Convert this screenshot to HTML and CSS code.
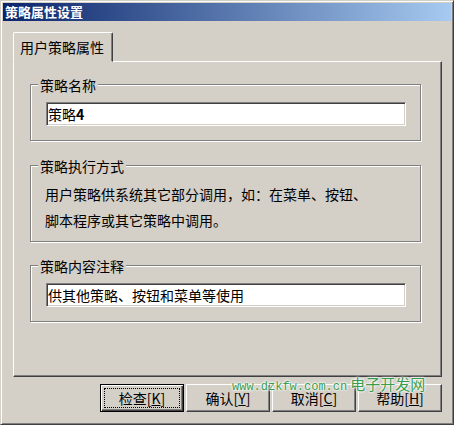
FILE: index.html
```html
<!DOCTYPE html>
<html lang="zh-CN">
<head>
    <meta charset="UTF-8">
    <title>策略属性设置</title>
    <link rel="stylesheet" href="styles.css">
</head>
<body>
    <div class="window">
        <div class="titlebar">策略属性设置</div>
        <div class="content">
            <div class="tab">用户策略属性</div>
            <div class="panel">
                <div class="group group-name">
                    <div class="legend">策略名称</div>
                    <div class="field">策略<b>4</b></div>
                </div>
                <div class="group group-run">
                    <div class="legend">策略执行方式</div>
                    <div class="desc">用户策略供系统其它部分调用，如：在菜单、按钮、<br>脚本程序或其它策略中调用。</div>
                </div>
                <div class="group group-note">
                    <div class="legend">策略内容注释</div>
                    <div class="field">供其他策略、按钮和菜单等使用</div>
                </div>
            </div>
            <div class="buttons">
                <button class="btn btn-default">检查[<u>K</u>]</button>
                <button class="btn">确认[<u>Y</u>]</button>
                <button class="btn">取消[<u>C</u>]</button>
                <button class="btn">帮助[<u>H</u>]</button>
            </div>
        </div>
        <div class="watermark"><span class="wm-url">www.dzkfw.com.cn</span> <span class="wm-name">电子开发网</span></div>
    </div>
</body>
</html>
```

FILE: styles.css
```css
body {
    margin: 0;
    background: #d4d0c8;
    font-family: "Noto Sans CJK SC", "Noto Sans", sans-serif;
    font-size: 14px;
    color: #000;
}

.window {
    box-sizing: border-box;
    position: relative;
    width: 454px;
    height: 425px;
    padding: 2px;
    background: #d4d0c8;
    border: 1px solid;
    border-color: #d4d0c8 #404040 #404040 #d4d0c8;
    box-shadow: inset 1px 1px #fff, inset -1px -1px #808080;
}

.titlebar {
    height: 18px;
    line-height: 18px;
    padding-left: 2px;
    background: linear-gradient(to right, #0a246a, #a6caf0);
    color: #fff;
    font-size: 13px;
    font-weight: bold;
}

.content {
    padding: 11px 9px 0 10px;
}

/* tab header */
.tab {
    box-sizing: border-box;
    position: relative;
    z-index: 1;
    width: 100px;
    height: 30px;
    margin-bottom: -1px;
    padding-left: 6px;
    line-height: 28px;
    background: #d4d0c8;
    border: 1px solid;
    border-color: #fff #404040 #d4d0c8 #fff;
    border-radius: 2px 2px 0 0;
    box-shadow: inset -1px 0 #808080;
}

.panel {
    box-sizing: border-box;
    height: 316px;
    padding: 22px 0 0 16px;
    border: 1px solid;
    border-color: #fff #404040 #404040 #fff;
    box-shadow: inset -1px -1px #808080;
}

/* etched group boxes */
.group {
    box-sizing: border-box;
    width: 391px;
    border: 1px solid #808080;
    box-shadow: inset 1px 1px #fff, 1px 1px #fff;
}

.group-name { height: 57px; }
.group-run { height: 77px; margin-top: 24px; }
.group-note { height: 57px; margin-top: 23px; }

.legend {
    width: fit-content;
    margin: -8px 0 0 7px;
    padding: 0 2px;
    line-height: 16px;
    background: #d4d0c8;
}

.field {
    box-sizing: border-box;
    width: 360px;
    height: 24px;
    margin: 9px 0 0 15px;
    padding-left: 1px;
    line-height: 22px;
    background: #fff;
    border: 1px solid;
    border-color: #808080 #fff #fff #808080;
    box-shadow: inset 1px 1px #404040, inset -1px -1px #d4d0c8;
    white-space: nowrap;
}

.desc {
    margin: 7px 0 0 14px;
    line-height: 26px;
}

/* dialog buttons */
.buttons {
    display: flex;
    justify-content: flex-end;
    gap: 2px;
    margin-top: 7px;
}

.btn {
    box-sizing: border-box;
    width: 84px;
    height: 28px;
    padding: 0;
    font-family: inherit;
    font-size: 14px;
    color: #000;
    background: #d4d0c8;
    border: 1px solid;
    border-color: #fff #404040 #404040 #fff;
    box-shadow: inset -1px -1px #808080;
}

.btn-default {
    border-color: #000;
    box-shadow: inset 1px 1px #fff, inset -1px -1px #404040, inset -2px -2px #808080;
    outline: 1px dotted #000;
    outline-offset: -5px;
}

.watermark {
    position: absolute;
    left: 231px;
    top: 372px;
    color: #3a9c4c;
    white-space: nowrap;
    text-shadow: 0 0 2px #fff, 0 0 2px #fff, 0 0 3px #fff;
}

.wm-url {
    font-family: "Liberation Mono", monospace;
    font-size: 12px;
}

.wm-name {
    font-size: 15px;
}
```
